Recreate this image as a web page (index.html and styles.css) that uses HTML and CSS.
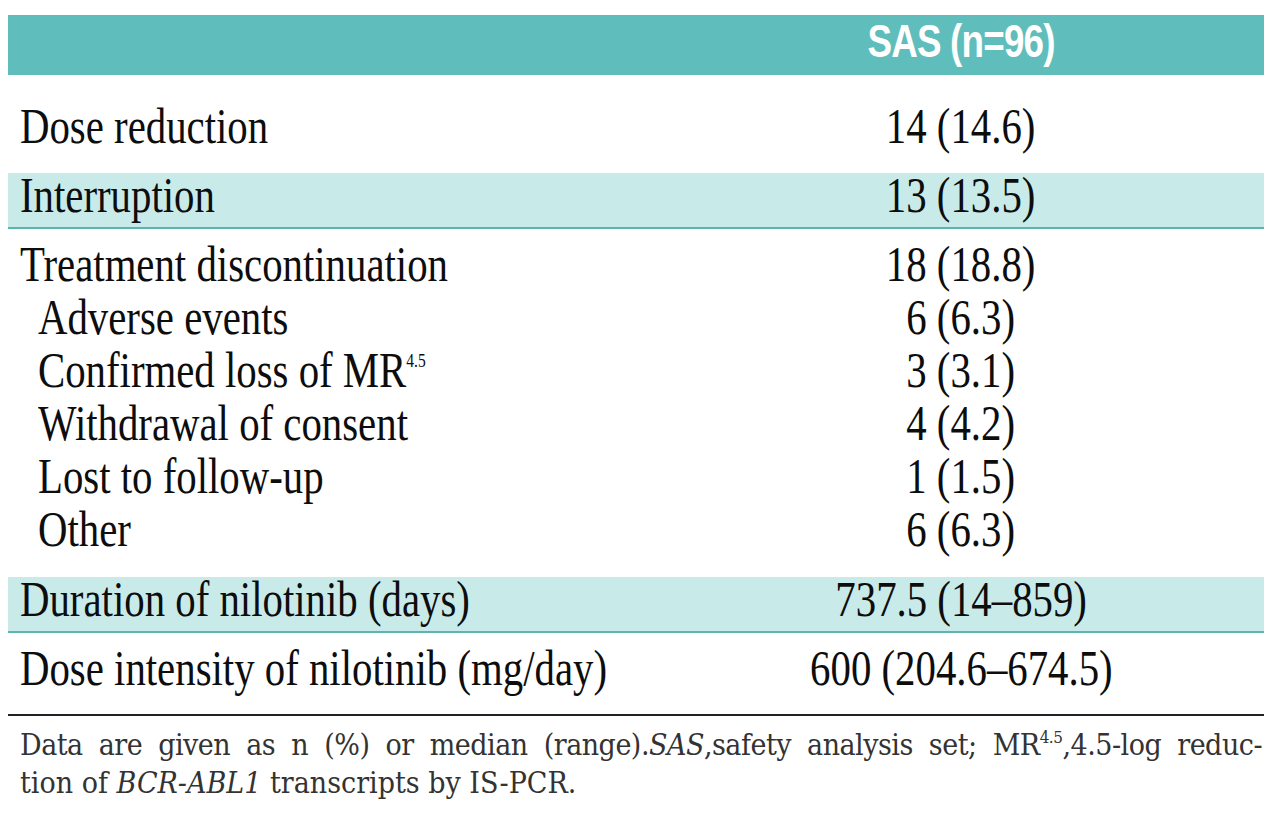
FILE: index.html
```html
<!DOCTYPE html>
<html lang="en">
<head>
<meta charset="utf-8">
<title>Nilotinib exposure</title>
<link rel="stylesheet" href="styles.css">
</head>
<body>
<div class="page">
  <div class="table">
    <div class="row head">
      <div class="cell-l"></div>
      <div class="cell-r"><span class="h">SAS (n=96)</span></div>
    </div>
    <div class="row first">
      <div class="cell-l"><span class="t">Dose reduction</span></div>
      <div class="cell-r"><span class="t">14 (14.6)</span></div>
    </div>
    <div class="row band">
      <div class="cell-l"><span class="t">Interruption</span></div>
      <div class="cell-r"><span class="t">13 (13.5)</span></div>
    </div>
    <div class="group">
      <div class="row">
        <div class="cell-l"><span class="t">Treatment discontinuation</span></div>
        <div class="cell-r"><span class="t">18 (18.8)</span></div>
      </div>
      <div class="row sub">
        <div class="cell-l"><span class="t">Adverse events</span></div>
        <div class="cell-r"><span class="t">6 (6.3)</span></div>
      </div>
      <div class="row sub">
        <div class="cell-l"><span class="t">Confirmed loss of MR<sup class="sup">4.5</sup></span></div>
        <div class="cell-r"><span class="t">3 (3.1)</span></div>
      </div>
      <div class="row sub">
        <div class="cell-l"><span class="t">Withdrawal of consent</span></div>
        <div class="cell-r"><span class="t">4 (4.2)</span></div>
      </div>
      <div class="row sub">
        <div class="cell-l"><span class="t">Lost to follow-up</span></div>
        <div class="cell-r"><span class="t">1 (1.5)</span></div>
      </div>
      <div class="row sub">
        <div class="cell-l"><span class="t">Other</span></div>
        <div class="cell-r"><span class="t">6 (6.3)</span></div>
      </div>
    </div>
    <div class="row band">
      <div class="cell-l"><span class="t">Duration of nilotinib (days)</span></div>
      <div class="cell-r"><span class="t">737.5 (14–859)</span></div>
    </div>
    <div class="row last">
      <div class="cell-l"><span class="t">Dose intensity of nilotinib (mg/day)</span></div>
      <div class="cell-r"><span class="t">600 (204.6–674.5)</span></div>
    </div>
  </div>
  <div class="note">
    <div class="l1">Data are given as n (%) or median (range).<i>SAS</i>,safety analysis set; MR<sup class="nsup">4.5</sup>,4.5-log reduc-</div>
    <div class="l2">tion of <i>BCR-ABL1</i> transcripts by IS-PCR.</div>
  </div>
</div>
</body>
</html>
```

FILE: styles.css
```css
body {
  margin: 0;
  background: #ffffff;
}

.page {
  padding: 15px 16px 0 8px;
}

.table {
  width: 1256px;
  font-family: "Liberation Serif", "Times New Roman", serif;
  font-size: 50px;
  color: #0d0d0d;
}

.row {
  display: grid;
  grid-template-columns: 650px 606px;
}

.cell-l {
  padding-left: 12px;
}

.cell-r {
  text-align: center;
}

.t {
  display: inline-block;
  white-space: nowrap;
  transform: scaleX(0.816);
  transform-origin: 0 50%;
}

.cell-r .t {
  transform-origin: 50% 50%;
}

.sup {
  font-size: 19px;
  line-height: 0;
  vertical-align: 20px;
}

.head {
  background: #5fbdbb;
  height: 60px;
  box-sizing: border-box;
  padding-bottom: 8px;
  font-family: "Liberation Sans", Arial, sans-serif;
  font-size: 46px;
  line-height: 52px;
}

.h {
  display: inline-block;
  font-weight: 700;
  color: #ffffff;
  letter-spacing: -1px;
  transform: scaleX(0.8);
  transform-origin: 50% 50%;
}

.first {
  line-height: 53px;
  padding: 25px 0 20px;
}

.band {
  background: #c8ebea;
  border-bottom: 2px solid #5cb5b0;
  line-height: 44px;
  padding-bottom: 10px;
}

.group {
  line-height: 53px;
  padding: 9px 0 21px;
}

.sub .cell-l {
  padding-left: 30px;
}

.last {
  line-height: 53px;
  padding: 9px 0 19px;
  border-bottom: 2px solid #222222;
}

.note {
  width: 1242px;
  padding: 10px 0 0 12px;
  font-family: "DejaVu Serif Condensed", "DejaVu Serif", serif;
  font-stretch: condensed;
  font-size: 30px;
  line-height: 38px;
  color: #333333;
}

.l1 {
  text-align: justify;
  text-align-last: justify;
  letter-spacing: -0.5px;
  word-spacing: -2px;
}

.nsup {
  font-size: 17px;
  line-height: 0;
  vertical-align: 12px;
}
```
